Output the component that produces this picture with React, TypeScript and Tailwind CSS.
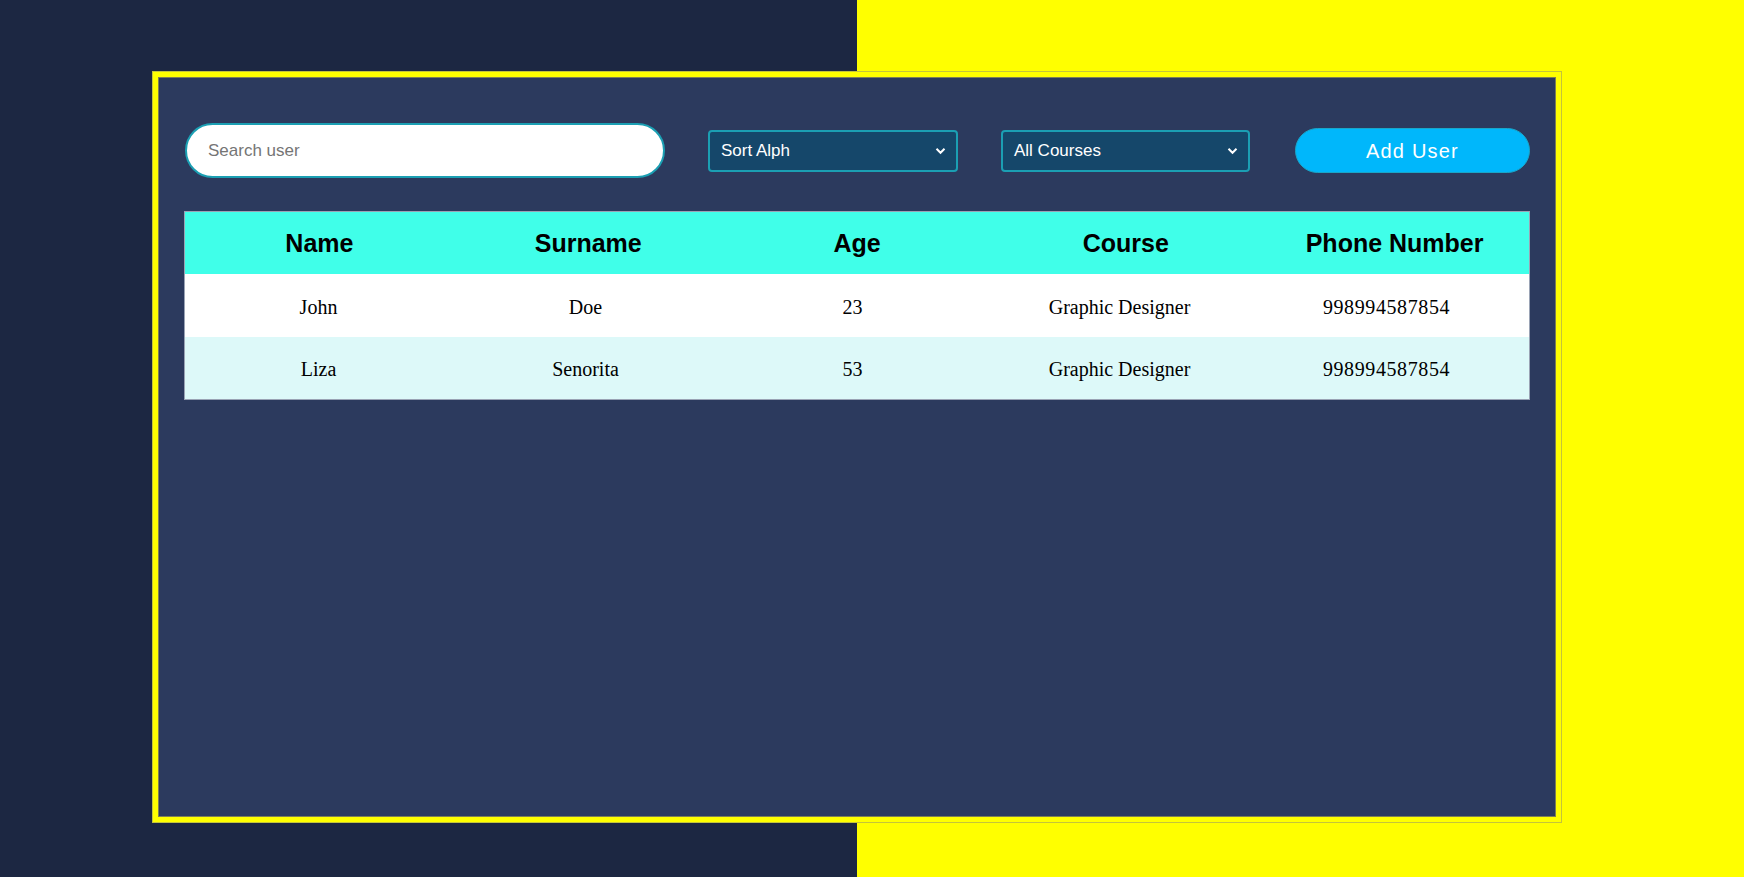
import React from "react";

const rows = [
  { name: "John", surname: "Doe", age: "23", course: "Graphic Designer", phone: "998994587854" },
  { name: "Liza", surname: "Senorita", age: "53", course: "Graphic Designer", phone: "998994587854" },
];

function Chevron() {
  return (
    <svg width="11" height="8" viewBox="0 0 11 8" className="shrink-0">
      <path d="M1.5 1.8 L5.5 5.8 L9.5 1.8" fill="none" stroke="#ffffff" strokeWidth="2" />
    </svg>
  );
}

function SelectBox({ label, width }: { label: string; width: string }) {
  return (
    <div
      className={`${width} h-[42px] flex items-center justify-between pl-[11px] pr-[10px] rounded-[4px] border-2 border-[#1b9fb3] bg-[#15476a] text-white text-[17px]`}
      style={{ fontFamily: "'Liberation Sans', Arial, sans-serif" }}
    >
      <span>{label}</span>
      <Chevron />
    </div>
  );
}

export default function App() {
  return (
    <div className="w-[1744px] h-[877px] flex relative overflow-hidden">
      <div className="w-[857px] h-full bg-[#1c2742]" />
      <div className="flex-1 h-full bg-[#ffff00]" />
      <div className="absolute left-[152px] top-[71px] w-[1410px] h-[752px] border border-[#c4c43a] bg-[#ffff00] p-[5px]">
        <div className="w-full h-full border border-[#7e7f55] bg-[#2c3a5e] px-[25px] pt-[44px]">
          <div className="flex items-center h-[57px]">
            <div className="ml-px w-[480px] h-[55px] rounded-full border-2 border-[#1b9fb3] bg-white flex items-center pl-[21px]">
              <input
                placeholder="Search user"
                className="w-full bg-transparent outline-none text-[17px] text-[#222] placeholder:text-[#757575]"
                style={{ fontFamily: "'Liberation Sans', Arial, sans-serif" }}
              />
            </div>
            <div className="ml-[43px]">
              <SelectBox label="Sort Alph" width="w-[250px]" />
            </div>
            <div className="ml-[43px]">
              <SelectBox label="All Courses" width="w-[249px]" />
            </div>
            <button
              className="ml-auto w-[235px] h-[45px] rounded-full bg-[#00b7fb] border border-[#1aa5c8] text-white text-[20px] tracking-[1.2px]"
              style={{ fontFamily: "'Liberation Sans', Arial, sans-serif" }}
            >
              Add User
            </button>
          </div>
          <div className="mt-[32px] border-t border-x border-b border-[#9aa3b5]">
            <div
              className="grid grid-cols-5 h-[62px] pt-[2px] bg-[#40ffe9] items-center text-center text-black text-[25px] font-bold"
              style={{ fontFamily: "'Liberation Sans', Arial, sans-serif" }}
            >
              <div>Name</div>
              <div>Surname</div>
              <div>Age</div>
              <div>Course</div>
              <div>Phone Number</div>
            </div>
            {rows.map((r, i) => (
              <div
                key={i}
                className={`grid grid-cols-5 pr-[9px] pt-[2px] items-center text-center text-black text-[20px] ${
                  i % 2 === 0 ? "bg-white h-[63px]" : "bg-[#ddf9f9] h-[62px]"
                }`}
                style={{ fontFamily: "'Liberation Serif', 'Times New Roman', serif" }}
              >
                <div>{r.name}</div>
                <div>{r.surname}</div>
                <div>{r.age}</div>
                <div>{r.course}</div>
                <div className="tracking-[0.6px]">{r.phone}</div>
              </div>
            ))}
          </div>
        </div>
      </div>
    </div>
  );
}
